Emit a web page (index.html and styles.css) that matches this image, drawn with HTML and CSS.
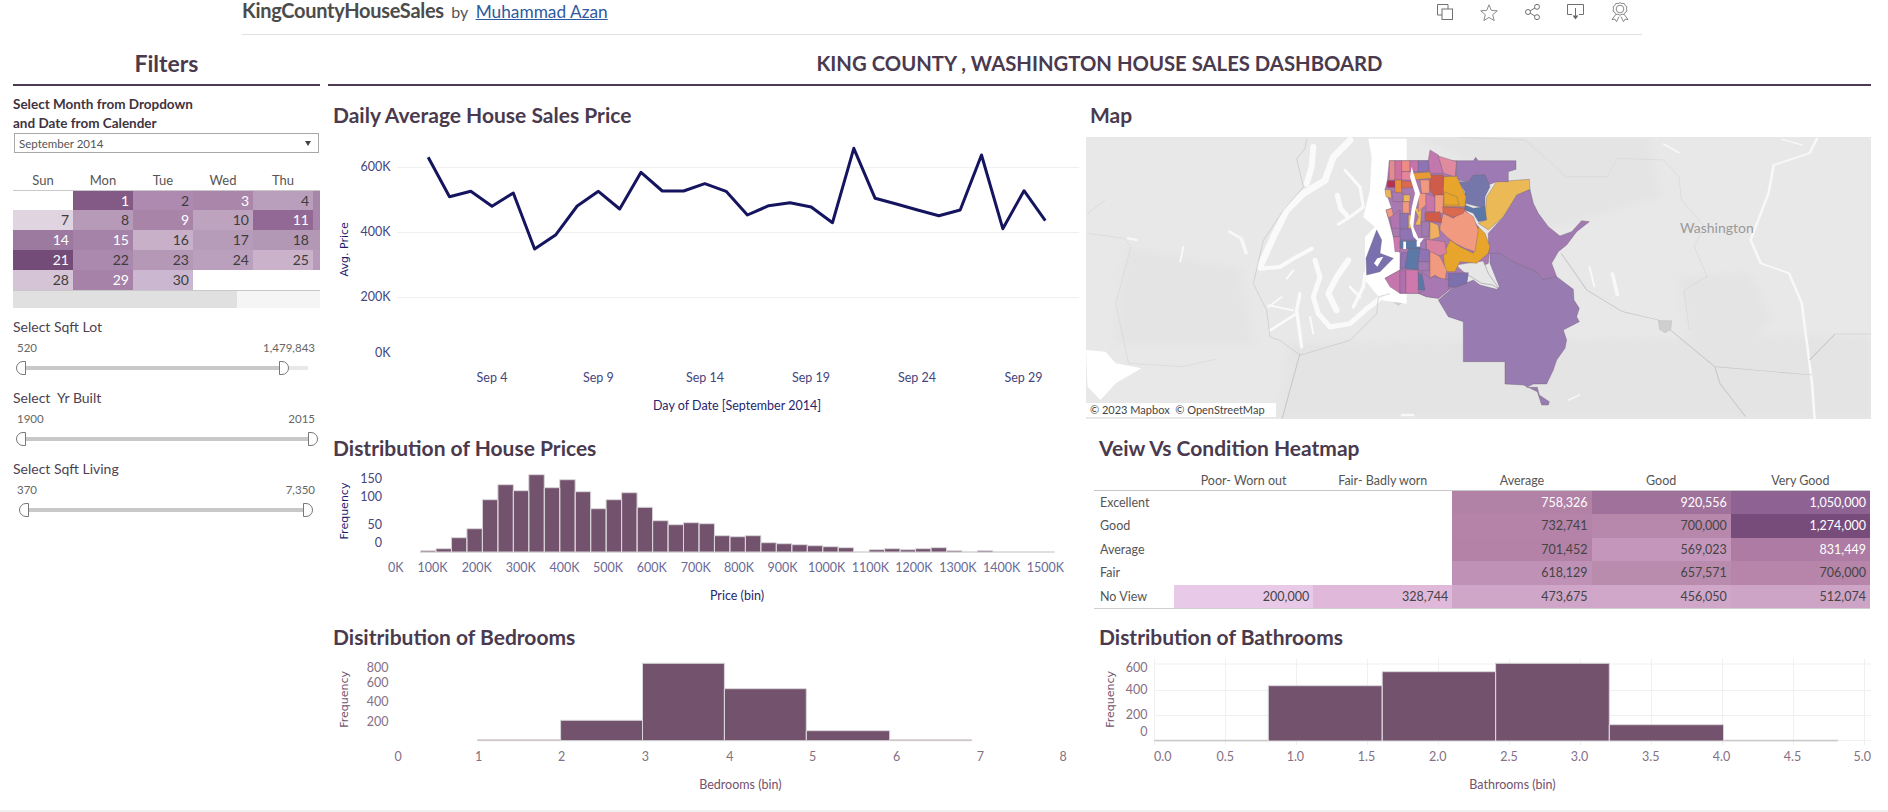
FILE: index.html
```html
<!DOCTYPE html>
<html lang="en">
<head>
<meta charset="utf-8">
<title>KingCountyHouseSales</title>
<link rel="stylesheet" href="styles.css">
</head>
<body>
<header class="topbar">
  <div class="wb-title"><b>KingCountyHouseSales</b> <span class="by">by</span> <a href="#">Muhammad Azan</a></div>
  <div class="tools">
    <svg class="tool" width="16" height="16" viewBox="0 0 16 16"><path d="M5 11H.5V.5H11V5"/><rect x="5" y="5" width="10.5" height="10.5"/></svg>
    <svg class="tool star" width="18" height="17" viewBox="0 0 18 17"><path d="M9 .8l2.3 5.6 6 .4-4.6 3.9 1.5 5.9L9 13.4l-5.2 3.2 1.5-5.9L.7 6.800l6-.4z"/></svg>
    <svg class="tool" width="15" height="16" viewBox="0 0 15 16"><circle cx="12" cy="2.800" r="2.500"/><circle cx="12" cy="13.200" r="2.500"/><circle cx="3" cy="8" r="2.500"/><path d="M5.200 6.800l4.700-2.800M5.200 9.200l4.700 2.800"/></svg>
    <svg class="tool" width="17" height="16" viewBox="0 0 17 16"><path d="M5 10.500H.5V.5h16v10H12"/><path d="M8.500 4v8"/><path class="solid" d="M5.500 11.500h6L8.500 15.500z"/></svg>
    <svg class="tool star" width="18" height="20" viewBox="0 0 18 20"><circle cx="9" cy="7" r="3.800"/><path d="M9 .6l2 1 2.200-.2 1 2 1.800 1.300-.5 2.200.5 2.200-1.800 1.300-1 2-2.200-.2-2 1-2-1-2.200.2-1-2L2 9.100l.5-2.200L2 4.700l1.800-1.300 1-2L7 1.600z"/><path d="M4.800 12.500L1 17.500l3-.3 1.500 2.500 2.500-5M13.200 12.500l3.800 5-3 -.3-1.500 2.500-2.500-5"/></svg>
  </div>
</header>

<div class="main">
  <aside class="sidebar">
    <h2 class="filters-title">Filters</h2>
    <p class="cal-label">Select Month from Dropdown<br>and Date from Calender</p>
    <div class="dropdown"><span>September 2014</span><i class="caret"></i></div>
    <div class="cal-head"><span>Sun</span><span>Mon</span><span>Tue</span><span>Wed</span><span>Thu</span><span></span></div>
    <div class="cal-grid">
      <div></div>
      <div class="on" style="background:#835a85">1</div>
      <div style="background:#ae8ab0">2</div>
      <div class="on" style="background:#aa86ab">3</div>
      <div style="background:#b99fbc">4</div>
      <div style="background:#a687a8"></div>
      <div style="background:#e0d4e0">7</div>
      <div style="background:#b79ab7">8</div>
      <div class="on" style="background:#a884a9">9</div>
      <div style="background:#bda3be">10</div>
      <div class="on" style="background:#926895">11</div>
      <div style="background:#a885aa"></div>
      <div class="on" style="background:#9c7a9f">14</div>
      <div class="on" style="background:#a582a8">15</div>
      <div style="background:#c7b0c8">16</div>
      <div style="background:#b79cba">17</div>
      <div style="background:#b398b6">18</div>
      <div style="background:#b398b6"></div>
      <div class="on" style="background:#744c78">21</div>
      <div style="background:#ab88ad">22</div>
      <div style="background:#b598b6">23</div>
      <div style="background:#bba0bd">24</div>
      <div style="background:#c9b2ca">25</div>
      <div style="background:#b79ab9"></div>
      <div style="background:#d4c4d6">28</div>
      <div class="on" style="background:#a682a9">29</div>
      <div style="background:#cbb7cf">30</div>
    </div>
    <div class="scrollbar"><div class="thumb"></div></div>

    <div class="filter">
      <div class="f-label">Select Sqft Lot</div>
      <div class="f-values"><span>520</span><span>1,479,843</span></div>
      <div class="slider"><i class="h-l"></i><i class="fill"></i><i class="h-r"></i><i class="rest"></i></div>
    </div>
    <div class="filter">
      <div class="f-label">Select&nbsp; Yr Built</div>
      <div class="f-values"><span>1900</span><span>2015</span></div>
      <div class="slider"><i class="h-l"></i><i class="fill"></i><i class="h-r"></i></div>
    </div>
    <div class="filter">
      <div class="f-label">Select Sqft Living</div>
      <div class="f-values"><span>370</span><span>7,350</span></div>
      <div class="slider inset"><i class="h-l"></i><i class="fill"></i><i class="h-r"></i></div>
    </div>
  </aside>

  <main class="content">
    <h1 class="dash-title">KING COUNTY , WASHINGTON HOUSE SALES DASHBOARD</h1>
    <div class="panels">
      <section class="panel first left">
        <h3>Daily Average House Sales Price</h3>
        <svg class="chart navy" width="757" height="303" viewBox="328 130 757 303">
          <g class="grid">
            <path d="M397 167.500H1079M397 232.500H1079M397 297.500H1079"/>
          </g>
          <polyline class="trend" points="428.200,157.300 449.500,196.700 470.800,191.300 492,206.300 513.300,193 534.600,249 555.900,234.700 577.200,206 598.400,191.300 619.700,209 641,172.300 662.300,191 683.600,191 704.800,183.700 726.100,191.300 747.400,215 768.700,205.700 790,202.700 811.200,207 832.500,222.700 853.800,148.300 875.100,198.300 896.400,204 917.600,210 938.900,215.700 960.200,210 981.500,155 1002.800,228.700 1024,190.700 1045.300,220.700"/>
          <g class="tick end">
            <text x="390.500" y="171">600K</text>
            <text x="390.500" y="236">400K</text>
            <text x="390.500" y="301">200K</text>
            <text x="390.500" y="357">0K</text>
          </g>
          <g class="tick mid">
            <text x="492" y="382">Sep 4</text>
            <text x="598.400" y="382">Sep 9</text>
            <text x="705" y="382">Sep 14</text>
            <text x="811" y="382">Sep 19</text>
            <text x="917" y="382">Sep 24</text>
            <text x="1023.500" y="382">Sep 29</text>
          </g>
          <text class="axis mid" x="737" y="410">Day of Date [September 2014]</text>
          <text class="axis-y" transform="translate(348 249.300) rotate(-90)">Avg. Price</text>
        </svg>
      </section>

      <section class="panel first right">
        <h3 class="map-h">Map</h3>
        <svg class="map" width="785" height="282" viewBox="1086 137 785 282">
          <rect x="1086" y="137" width="785" height="282" fill="#e8e8e8"/>
          <g transform="translate(1085 130) scale(.512 .3333)">
            <g class="soft-base" fill="#e4e4e4">
              <polygon points="400,640 1535,620 1535,866 380,866"/>
              <polygon points="1160,440 1300,430 1340,560 1300,680 1180,640"/>
              <polygon points="80,350 300,420 330,640 60,640"/>
              <polygon points="650,22 1100,22 1120,200 900,300 800,130"/>
            </g>
            <g class="soft-water">
              <polygon fill="#fff" points="2,660 40,665 60,700 110,715 60,760 30,810 5,770"/>
              <polyline class="w-md" points="282,305 305,325 315,370"/>
              <polyline class="w-md" points="85,325 100,330"/>
              <polyline class="w-sm" points="192,350 186,395"/>
              <polyline class="w-sm" points="1130,42 1160,68"/>
              <polyline class="w-sm" points="1362,28 1400,45"/>
              <polyline class="w-sm" points="985,410 995,470"/>
              <polyline class="w-md" points="1030,430 1040,495"/>
              <polyline class="w-sm" points="945,810 965,795"/>
              <polyline class="w-md" points="620,855 640,855"/>
              <polyline class="w-river" points="1430,25 1415,70 1345,105 1335,190 1300,330 1320,400 1375,430 1400,520 1410,640 1420,760 1425,866"/>
            </g>
            <g class="road">
              <polyline points="385,866 420,670"/>
              <polyline points="930,370 980,480 1050,545 1120,570 1230,710 1420,735"/>
              <polyline points="1415,690 1465,612 1535,612"/>
              <polyline points="1230,710 1240,760 1290,860"/>
            </g>
            <g class="border">
              <polyline points="5,310 75,325 90,350 60,520 85,700 190,710 255,688"/>
              <polyline points="730,22 860,30 940,140 1020,140 1040,85 1130,90 1160,140 1165,210 1210,290 1190,350 1215,440 1170,480 1180,600"/>
              <polyline points="5,250 40,210"/>
            </g>
            <polygon class="shield" points="600,495 624,495 622,515 612,526 602,515"/>
            <polygon class="shield" points="1120,572 1146,572 1144,598 1133,608 1122,598"/>
          </g>
          <g transform="translate(1250 137) scale(.3333)">
            <g class="sound">
              <polygon class="sea" points="355,5 470,5 470,500 395,490 345,430 345,300 375,270 340,240 360,160 365,60"/>
              <polyline stroke-width="20" points="300,10 250,60 225,130 160,170 110,220 70,300 30,390"/>
              <polyline stroke-width="18" points="190,30 185,90 170,140"/>
              <polyline stroke-width="12" points="30,395 90,390 130,365 185,335"/>
              <polyline stroke-width="9" points="285,100 330,150 340,210 300,240 265,262"/>
              <polyline stroke-width="15" points="262,175 272,215 290,235"/>
              <polyline stroke-width="15" points="195,370 210,420 190,480 205,530 240,570 300,560 345,520 395,480"/>
              <polyline stroke-width="18" points="295,370 260,420 235,470 260,520"/>
              <polyline stroke-width="8" points="300,450 330,480"/>
              <polyline stroke-width="10" points="345,410 340,450 310,510"/>
              <polyline stroke-width="10" points="150,470 140,520 155,630"/>
              <polyline stroke-width="5" points="55,510 95,480"/>
              <polyline stroke-width="5" points="55,505 130,520"/>
              <polyline stroke-width="8" points="60,580 140,530"/>
              <polyline stroke-width="6" points="180,540 190,590"/>
              <polyline stroke-width="6" points="130,400 110,425"/>
            </g>
            <g class="road">
              <polyline points="150,655 300,610 380,530 385,480 420,470"/>
              <polyline points="150,655 90,610 60,600 50,520 10,440 40,310 100,220 160,150 140,65 165,35 170,5"/>
            </g>
          </g>
          <g transform="translate(1300 130) scale(.3333)" class="tracts">
            <polygon fill="#a87ab0" points="268,92 470,92 470,150 498,200 495,240 535,290 570,350 565,400 505,428 500,460 445,480 415,505 380,500 355,490 300,490 255,445 300,420 300,370 280,320 258,240 275,235 255,178 262,152"/>
            <polygon fill="#987bb0" points="415,510 450,480 520,450 540,465 590,478 598,470 570,400 570,370 600,370 640,395 710,425 728,448 770,440 820,478 822,510 838,535 830,560 838,575 790,600 800,630 795,655 770,690 760,720 740,762 700,762 680,772 712,772 718,795 748,815 745,825 725,825 712,785 670,765 615,762 615,695 490,695 490,575 445,560"/>
            <polygon fill="#e6e6e6" points="468,405 500,400 550,393 565,430 598,478 578,465 545,460 520,445 490,425"/>
            <polygon fill="#a07ab0" points="565,370 600,370 640,395 710,425 728,448 770,440 755,400 775,365 800,345 830,305 868,275 845,272 815,305 780,318 745,290 715,250 700,220 690,178 650,195 610,260 565,310"/>
            <polygon fill="#ecb957" points="555,270 560,200 590,155 688,148 690,178 650,195 610,260 565,300 535,280"/>
            <polygon fill="#9d7ab3" points="470,92 520,92 527,82 535,92 648,92 648,118 625,125 625,155 590,155 565,165 555,135 520,140 505,155 470,150"/>
            <polygon fill="#7577ab" points="475,155 505,155 520,135 555,135 570,170 555,200 555,235 495,220 495,185"/>
            <polygon fill="#5c78a6" points="495,225 520,235 555,230 560,270 535,275 520,250 495,240"/>
            <polygon fill="#e8a52c" points="432,140 470,138 498,200 495,230 430,230 428,185"/>
            <polygon fill="#e8a52c" points="432,185 470,200 478,225 432,225"/>
            <polygon fill="#e8a52c" points="535,290 555,310 570,350 565,370 530,400 480,395 465,425 435,425 430,375 450,330 480,350 520,370"/>
            <polygon fill="#f29a80" points="420,290 430,250 460,265 490,240 520,260 535,300 525,365 495,355 465,340 440,320 420,300"/>
            <polygon fill="#f29a80" points="390,360 420,380 440,420 435,455 405,435 390,445"/>
            <polygon fill="#d8829f" points="378,328 435,335 440,370 420,378 380,360"/>
            <polygon fill="#cf5c4a" points="390,135 430,135 430,195 410,210 390,180"/>
            <polygon fill="#c278ae" points="390,60 415,75 430,130 390,130 385,90"/>
            <polygon fill="#e08aa0" points="415,78 470,95 465,140 430,130"/>
            <polygon fill="#e89a35" points="340,130 390,125 395,145 340,150"/>
            <polygon fill="#7a70ae" points="230,300 245,330 240,370 280,385 240,425 200,435 198,385 215,340"/>
            <polygon fill="#e58a93" points="268,92 285,92 285,150 268,150"/>
            <polygon fill="#cf70a0" points="285,92 305,92 305,150 285,150"/>
            <polygon fill="#ee8c83" points="305,92 330,92 330,125 305,125"/>
            <polygon fill="#c673a8" points="330,92 355,92 355,125 330,125"/>
            <polygon fill="#8e74b4" points="355,92 385,92 385,125 355,125"/>
            <polygon fill="#e4859b" points="305,125 335,125 340,150 305,150"/>
            <polygon fill="#b8304f" points="262,152 285,152 285,172 262,172"/>
            <polygon fill="#e98e3c" points="285,150 305,150 305,190 285,190"/>
            <polygon fill="#d96a50" points="305,152 345,155 345,172 305,175"/>
            <polygon fill="#ecb45f" points="255,178 272,180 275,205 258,200"/>
            <polygon fill="#a87ab0" points="275,185 310,190 310,215 280,215"/>
            <polygon fill="#ecb957" points="310,195 330,195 330,215 310,215"/>
            <polygon fill="#f29a80" points="308,215 328,215 328,250 308,250"/>
            <polygon fill="#f29a80" points="258,240 275,235 282,262 265,262"/>
            <polygon fill="#b075ae" points="270,262 300,240 300,300 275,295"/>
            <polygon fill="#8e74b4" points="300,250 325,250 325,295 300,295"/>
            <polygon fill="#ecb957" points="325,255 340,255 340,295 325,295"/>
            <polygon fill="#ecb957" points="342,235 365,235 362,285 345,285 355,260"/>
            <polygon fill="#a87ab0" points="275,295 300,295 300,320 280,320"/>
            <polygon fill="#8e74b4" points="300,298 345,298 345,330 300,330"/>
            <polygon fill="#cf78ad" points="280,320 300,320 300,365 285,365"/>
            <polygon fill="#5c78a6" points="300,332 360,332 360,355 300,355"/>
            <polygon fill="#8e74b4" points="305,368 325,368 315,415 300,415"/>
            <polygon fill="#5c78a6" points="325,355 360,355 355,420 315,415"/>
            <polygon fill="#8e74b4" points="360,355 388,360 388,395 355,395"/>
            <polygon fill="#a07ab0" points="355,395 388,395 388,422 355,422"/>
            <polygon fill="#c576ad" points="255,445 300,420 300,490 270,470"/>
            <polygon fill="#b070ae" points="300,420 318,420 318,490 300,490"/>
            <polygon fill="#cf78ad" points="318,420 355,420 355,490 318,490"/>
            <polygon fill="#5c78a6" points="355,425 370,440 375,480 355,480"/>
            <polygon fill="#a878b2" points="365,425 390,445 400,440 450,450 445,480 415,505 380,500 355,490 375,480"/>
            <polygon fill="#7d70ae" points="445,430 505,428 500,460 465,472 445,470"/>
            <polygon fill="#f29a80" points="355,190 378,190 378,225 355,245"/>
            <polygon fill="#f29a80" points="360,150 388,150 388,190 365,190"/>
            <polygon fill="#c875a8" points="378,190 405,200 405,245 378,245"/>
            <polygon fill="#f29a80" points="405,195 430,195 430,250 405,250"/>
            <polygon fill="#d96a50" points="428,230 495,235 490,250 460,262 430,250"/>
            <polygon fill="#cf5c4a" points="375,248 420,245 425,278 375,272"/>
            <polygon fill="#a07ab0" points="365,275 390,275 385,320 365,320"/>
            <polygon fill="#f0b060" points="390,275 415,285 420,320 390,330"/>
            <polygon fill="#a07ab0" points="355,330 378,330 378,360 360,355"/>
            <polygon class="lake" points="335,110 345,145 360,190 345,245 340,290 355,325 372,325 360,340 340,320 330,280 335,235 345,190 330,140"/>
            <rect class="lake" x="310" y="335" width="8" height="22"/>
            <rect class="lake" x="350" y="332" width="10" height="18"/>
            <polygon class="lake" points="232,385 250,380 232,410 222,400"/>
          </g>
          <text class="map-place" x="1680" y="233">Washington</text>
          <rect x="1086" y="403" width="190" height="14" fill="#fff"/>
          <text class="map-credit" x="1090" y="414">© 2023 Mapbox  © OpenStreetMap</text>
        </svg>
      </section>

      <section class="panel left">
        <h3>Distribution of House Prices</h3>
        <svg class="chart navy" width="757" height="159" viewBox="328 463 757 159">
          <path class="base" d="M420 552H1054.500"/>
          <path class="bars" d="M420.500 552V550.700h15.470V552zM436 552V548.700h15.470V552zM451.400 552V537.700h15.470V552zM466.900 552V528.700h15.470V552zM482.400 552V499.700h15.470V552zM497.900 552V484.700h15.470V552zM513.300 552V490.700h15.470V552zM528.800 552V474.700h15.470V552zM544.300 552V487.700h15.470V552zM559.700 552V479.700h15.470V552zM575.200 552V491.700h15.470V552zM590.700 552V508.700h15.470V552zM606.100 552V499.700h15.470V552zM621.600 552V492.700h15.470V552zM637.100 552V507.300h15.470V552zM652.600 552V520.700h15.470V552zM668 552V524.700h15.470V552zM683.500 552V522.700h15.470V552zM699 552V523.700h15.470V552zM714.400 552V535.700h15.470V552zM729.900 552V536.700h15.470V552zM745.400 552V535.700h15.470V552zM760.800 552V542.700h15.470V552zM776.300 552V543.700h15.470V552zM791.800 552V544.700h15.470V552zM807.300 552V545.700h15.470V552zM822.700 552V546.700h15.470V552zM838.200 552V547.700h15.470V552zM869.100 552V549.700h15.470V552zM884.600 552V548.700h15.470V552zM900.100 552V549.700h15.470V552zM915.500 552V548.700h15.470V552zM931 552V547.700h15.470V552zM946.500 552V550.700h15.470V552zM977.400 552V550.700h15.470V552z"/>
          <g class="tick end">
            <text x="382" y="483">150</text>
            <text x="382" y="501">100</text>
            <text x="382" y="529">50</text>
            <text x="382" y="547">0</text>
          </g>
          <g class="tick mid soft">
            <text x="395.800" y="571.500">0K</text>
            <text x="432.600" y="571.500">100K</text>
            <text x="476.700" y="571.500">200K</text>
            <text x="520.800" y="571.500">300K</text>
            <text x="564.500" y="571.500">400K</text>
            <text x="608" y="571.500">500K</text>
            <text x="651.700" y="571.500">600K</text>
            <text x="695.800" y="571.500">700K</text>
            <text x="739" y="571.500">800K</text>
            <text x="782.600" y="571.500">900K</text>
            <text x="826.700" y="571.500">1000K</text>
            <text x="870.300" y="571.500">1100K</text>
            <text x="914" y="571.500">1200K</text>
            <text x="958" y="571.500">1300K</text>
            <text x="1001.700" y="571.500">1400K</text>
            <text x="1045.300" y="571.500">1500K</text>
          </g>
          <text class="axis mid" x="737" y="600">Price (bin)</text>
          <text class="axis-y" transform="translate(348 511) rotate(-90)">Frequency</text>
        </svg>
      </section>

      <section class="panel right">
        <h3 class="heat-h">Veiw Vs Condition Heatmap</h3>
        <div class="heat">
          <div class="hh"></div><div class="hh">Poor- Worn out</div><div class="hh">Fair- Badly worn</div><div class="hh">Average</div><div class="hh">Good</div><div class="hh">Very Good</div>
          <div class="rl">Excellent</div><div></div><div></div>
          <div class="v on" style="background:#b281a6">758,326</div><div class="v on" style="background:#a0719a">920,556</div><div class="v on" style="background:#8e6393">1,050,000</div>
          <div class="rl">Good</div><div></div><div></div>
          <div class="v" style="background:#b582a8">732,741</div><div class="v" style="background:#b788ab">700,000</div><div class="v on" style="background:#774c7a">1,274,000</div>
          <div class="rl">Average</div><div></div><div></div>
          <div class="v" style="background:#b482a7">701,452</div><div class="v" style="background:#c596bb">569,023</div><div class="v on" style="background:#ad7ba3">831,449</div>
          <div class="rl">Fair</div><div></div><div></div>
          <div class="v" style="background:#c091b6">618,129</div><div class="v" style="background:#b98cae">657,571</div><div class="v" style="background:#b685a9">706,000</div>
          <div class="rl">No View</div>
          <div class="v" style="background:#e9c9e8">200,000</div><div class="v" style="background:#e0b9da">328,744</div>
          <div class="v" style="background:#cfa5c8">473,675</div><div class="v" style="background:#d0a6c9">456,050</div><div class="v" style="background:#cda3c6">512,074</div>
        </div>
      </section>

      <section class="panel left">
        <h3>Disitribution of Bedrooms</h3>
        <svg class="chart mauve" width="757" height="158" viewBox="328 652 757 158">
          <path class="bars" d="M477.700 740.700V739.700H560.600V740.700zM560.600 740.700V720.300H642.500V740.700zM642.500 740.700V663.300H724.400V740.700zM724.400 740.700V688.700H806.300V740.700zM806.300 740.700V730.700H889.700V740.700zM889.700 740.700V739.700H971.600V740.700z"/>
          <g class="tick end">
            <text x="388.500" y="671.500">800</text>
            <text x="388.500" y="687">600</text>
            <text x="388.500" y="705.500">400</text>
            <text x="388.500" y="726">200</text>
          </g>
          <g class="tick mid">
            <text x="398.200" y="761">0</text>
            <text x="478.700" y="761">1</text>
            <text x="561.500" y="761">2</text>
            <text x="645.400" y="761">3</text>
            <text x="729.800" y="761">4</text>
            <text x="812.600" y="761">5</text>
            <text x="896.500" y="761">6</text>
            <text x="980.400" y="761">7</text>
            <text x="1063.200" y="761">8</text>
          </g>
          <text class="axis mid" x="740.400" y="789">Bedrooms (bin)</text>
          <text class="axis-y" transform="translate(348 699.300) rotate(-90)">Frequency</text>
        </svg>
      </section>

      <section class="panel right">
        <h3 class="heat-h">Distribution of Bathrooms</h3>
        <svg class="chart mauve" width="785" height="158" viewBox="1086 652 785 158">
          <g class="grid">
            <path d="M1154.500 664H1871M1154.500 690.500H1871M1154.500 715.500H1871M1154.500 740.500H1871"/>
            <path d="M1154.500 659V745M1225.500 659V745M1296.500 659V745M1367.500 659V745M1438.500 659V745M1509.500 659V745M1580.500 659V745M1651.500 659V745M1722.500 659V745M1793.500 659V745M1864.500 659V745"/>
          </g>
          <path class="bars" d="M1154.600 741V740.200H1268.300V741zM1268.300 741V685.700H1382.200V741zM1382.200 741V671.700H1495.600V741zM1495.600 741V663.300H1609.300V741zM1609.300 741V724.700H1723.500V741zM1723.500 741V740.200H1837.700V741z"/>
          <g class="tick end">
            <text x="1147.500" y="671.500">600</text>
            <text x="1147.500" y="694">400</text>
            <text x="1147.500" y="719">200</text>
            <text x="1147.500" y="736">0</text>
          </g>
          <g class="tick mid">
            <text x="1162.800" y="761">0.0</text>
            <text x="1225.300" y="761">0.5</text>
            <text x="1295.400" y="761">1.0</text>
            <text x="1366.600" y="761">1.5</text>
            <text x="1437.800" y="761">2.0</text>
            <text x="1509" y="761">2.5</text>
            <text x="1579.600" y="761">3.0</text>
            <text x="1650.800" y="761">3.5</text>
            <text x="1721.500" y="761">4.0</text>
            <text x="1792.600" y="761">4.5</text>
            <text x="1862.300" y="761">5.0</text>
          </g>
          <text class="axis mid" x="1512.500" y="789">Bathrooms (bin)</text>
          <text class="axis-y" transform="translate(1114 699.300) rotate(-90)">Frequency</text>
        </svg>
      </section>
    </div>
  </main>
</div>
<div class="footer-strip"></div>
</body>
</html>
```

FILE: styles.css
```css
* { box-sizing: border-box; }
html, body { margin: 0; padding: 0; }
body {
  width: 1888px;
  height: 812px;
  overflow: hidden;
  background: #fff;
  font-family: "Lato", "Liberation Sans", sans-serif;
  color: #4a3a4e;
}

/* top bar */
.topbar {
  display: flex;
  justify-content: space-between;
  align-items: flex-start;
  margin-left: 242px;
  width: 1400px;
  height: 35px;
  border-bottom: 1px solid #e0e0e0;
}
.wb-title {
  font-size: 17.300px;
  line-height: 21px;
  color: #555;
  white-space: nowrap;
}
.wb-title b { color: #4c4c4c; font-size: 20px; letter-spacing: -.3px; }
.wb-title .by { font-size: 16px; margin: 0 3px; }
.wb-title a { color: #2f5a9e; }
.tools {
  display: flex;
  align-items: center;
  gap: 27px;
  padding: 2px 13px 0 0;
}
.tool { fill: none; stroke: #707070; stroke-width: 1; display: block; }
.tool.star { stroke: #8a8a8a; }
.tool .solid { fill: #666; stroke: none; }

.main { display: flex; gap: 8px; padding: 0 17px 0 13px; }

/* sidebar */
.sidebar { width: 307px; flex: none; }
.filters-title {
  margin: 0;
  padding: 14px 0 7px;
  line-height: 28px;
  font-size: 23px;
  font-weight: 700;
  text-align: center;
  color: #4a3a4e;
  border-bottom: 2px solid #4d3a52;
}
.cal-label {
  margin: 9px 0 0;
  font-size: 13.500px;
  line-height: 19px;
  font-weight: 700;
  color: #3f3340;
}
.dropdown {
  display: flex;
  justify-content: space-between;
  align-items: center;
  height: 20px;
  margin: 0 1px;
  padding: 0 7px 0 4px;
  border: 1px solid #a8a8a8;
  font-size: 11.500px;
  color: #555;
}
.caret {
  width: 0;
  height: 0;
  border: 3px solid transparent;
  border-top: 5px solid #444;
  border-bottom: 0;
}
.cal-head {
  display: grid;
  grid-template-columns: repeat(5, 60px) 7px;
  margin-top: 18px;
  height: 20px;
  border-bottom: 1px solid #c9c9c9;
  font-size: 13px;
  line-height: 19px;
  text-align: center;
  color: #555;
}
.cal-grid {
  display: grid;
  grid-template-columns: repeat(5, 60px) 7px;
  grid-template-rows: 19px repeat(4, 20px);
  height: 99px;
}
.cal-grid div {
  padding-right: 4px;
  font-size: 14px;
  line-height: 20px;
  text-align: right;
  color: #3d3d3d;
}
.cal-grid .on, .heat .on { color: #fff; }
.scrollbar {
  height: 18px;
  background: #f5f5f5;
  border-top: 1px solid #c8c8c8;
}
.thumb { width: 224px; height: 100%; background: #e0e0e0; }

.filter { margin-top: 14px; }
.scrollbar + .filter { margin-top: 10px; }
.f-label { font-size: 14px; line-height: 18px; color: #4d3f52; }
.f-values {
  display: flex;
  justify-content: space-between;
  margin-top: 4px;
  padding: 0 5px 0 4px;
  font-size: 11.500px;
  line-height: 16px;
  color: #666;
}
.slider {
  display: flex;
  align-items: center;
  height: 14px;
  margin-top: 5px;
  padding-left: 3px;
}
.slider.inset { padding: 0 7px 0 6px; }
.slider i { display: block; }
.slider .fill { flex: 1; height: 4px; background: #c8c8c8; }
.slider .rest { width: 19px; height: 4px; background: #e8e8e8; }
.slider .h-l, .slider .h-r {
  flex: none;
  width: 10px;
  height: 14px;
  background: #fff;
  border: 1px solid #777;
}
.slider .h-l { border-radius: 7px 0 0 7px; }
.slider .h-r { border-radius: 0 7px 7px 0; }
.slider .rest { margin-right: 12px; }
.slider:not(.inset):not(:has(.rest)) { padding-right: 2px; }

/* content */
.content { width: 1543px; flex: none; }
.dash-title {
  margin: 0;
  padding: 14px 0 7px;
  line-height: 28px;
  font-size: 20.300px;
  font-weight: 700;
  text-align: center;
  color: #4a3a4e;
  border-bottom: 2px solid #4d3a52;
}
.panels {
  display: grid;
  grid-template-columns: 758px 785px;
  grid-template-rows: 347px 189px 188px;
}
.panel { min-width: 0; }
.panel.first { padding-top: 14px; }
.panel h3 {
  margin: 0;
  height: 30px;
  line-height: 30px;
  font-size: 21px;
  font-weight: 700;
  color: #4a3a4e;
  white-space: nowrap;
}
.panel.left h3 { padding-left: 5px; }
.panel .map-h { padding-left: 4px; }
.panel .heat-h { padding-left: 13px; }

/* svg charts */
svg.chart, svg.map { display: block; }
svg.map { margin-top: 7px; }
.grid path { fill: none; stroke: #f0f0f0; stroke-width: 1; }
.trend { fill: none; stroke: #15155f; stroke-width: 3; stroke-linejoin: round; }
.bars { fill: #73526d; stroke: #d8d5d8; stroke-width: 1; }
.base { stroke: #d4d4d4; stroke-width: 1.500; fill: none; }
.tick text { font-size: 12.500px; }
.navy .tick text { fill: #45457c; }
.navy .tick.soft text { fill: #6a6a96; }
.mauve .tick text { fill: #856f83; }
.end text { text-anchor: end; }
.mid, .mid text { text-anchor: middle; }
.axis { font-size: 12.500px; }
.navy .axis { fill: #26266e; }
.mauve .axis { fill: #73526d; }
.axis-y { font-family: "DejaVu Sans", sans-serif; font-size: 11px; text-anchor: middle; }
.navy .axis-y { fill: #1d1d70; }
.mauve .axis-y { fill: #73526d; }

/* map */
.soft-base { filter: blur(6px); }
.soft-water { filter: blur(.7px); }
.soft-water polyline { fill: none; stroke: #f8f8f8; stroke-linejoin: round; stroke-linecap: round; }
.w-sm { stroke-width: 4; }
.w-md { stroke-width: 7; }
.w-river { stroke-width: 5; stroke: #f4f4f4; }
.sound { filter: blur(.5px); }
.sound polyline { fill: none; stroke: #fafafa; stroke-linejoin: round; stroke-linecap: round; }
.sound .sea { fill: #fff; }
.tracts polygon { stroke: #6d6075; stroke-width: 1.500; stroke-opacity: .75; }
.tracts .lake { fill: #fff; stroke: none; }
.road polyline { fill: none; stroke: #c6c6c6; stroke-width: 2; }
.border polyline { fill: none; stroke: #d6d6d6; stroke-width: 1.500; }
.shield { fill: #cfcfcf; stroke: #b8b8b8; }
.map-place { font-size: 14px; fill: #9a9a9a; }
.map-credit { font-size: 11px; fill: #444; white-space: pre; }

/* heatmap */
.heat {
  display: grid;
  grid-template-columns: 80px repeat(5, 139.200px);
  grid-template-rows: 28px repeat(5, 23.400px);
  margin-left: 8px;
  width: 776px;
  border-bottom: 1px solid #d0d0d0;
  font-size: 12.500px;
  color: #444;
}
.hh {
  padding-top: 9px;
  line-height: 18px;
  text-align: center;
  color: #555;
  border-bottom: 1px solid #c8c8c8;
}
.rl { padding-left: 6px; line-height: 23px; color: #555; }
.v { padding-right: 4px; line-height: 23px; text-align: right; }

.footer-strip { height: 2px; background: #f0f0f0; }
```
